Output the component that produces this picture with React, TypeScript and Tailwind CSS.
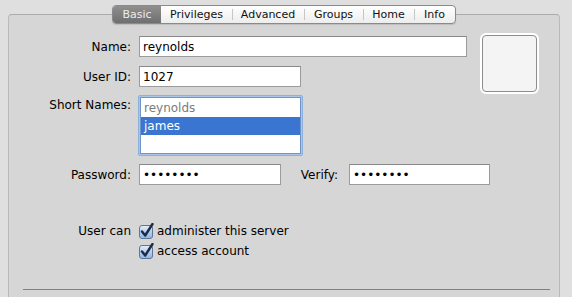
import React from 'react';

const tabs = [
  { label: 'Basic', w: 'w-[48px]' },
  { label: 'Privileges', w: 'w-[71px]' },
  { label: 'Advanced', w: 'w-[72px]' },
  { label: 'Groups', w: 'w-[59px]' },
  { label: 'Home', w: 'w-[51px]' },
  { label: 'Info', w: 'w-[41px]' },
];

const Checkbox: React.FC = () => (
  <svg width="17" height="17" viewBox="0 0 17 17" className="shrink-0">
    <defs>
      <linearGradient id="cbg" x1="0" y1="0" x2="0" y2="1">
        <stop offset="0" stopColor="#e6f0fb" />
        <stop offset="0.5" stopColor="#b3cff0" />
        <stop offset="1" stopColor="#8db6e6" />
      </linearGradient>
    </defs>
    <rect x="0.5" y="2.5" width="13" height="13" rx="2.5" fill="url(#cbg)" stroke="#5f7595" />
    <path d="M3 8.5 L6.2 12.5 L13.5 1" fill="none" stroke="#1d2b44" strokeWidth="2.4" strokeLinecap="round" strokeLinejoin="round" />
  </svg>
);

const Field: React.FC<{ w: string; children?: React.ReactNode }> = ({ w, children }) => (
  <div className={`${w} h-[21px] bg-white border border-[#9b9b9b] border-t-[#8a8a8a] pl-[3px] flex items-center text-black`}>
    {children}
  </div>
);

const Label: React.FC<{ w?: string; children: React.ReactNode }> = ({ w = 'w-[122px]', children }) => (
  <div className={`${w} shrink-0 text-right text-black`}>{children}</div>
);

export default function App() {
  return (
    <div
      className="w-[572px] h-[297px] overflow-hidden bg-[#dfdfdf] pt-[14px] text-[12px] leading-none"
      style={{ fontFamily: '"DejaVu Sans", "Liberation Sans", sans-serif' }}
    >
      <div className="ml-[8px] w-[552px] h-[300px] bg-[#d6d6d6] border-t border-l border-r border-[#ababab] border-l-[#b9b9b9] border-r-[#b9b9b9] rounded-t-[4px]">
        {/* tab bar */}
        <div className="-mt-[10px] flex justify-center">
          <div className="flex h-[19px] rounded-[4px] border border-[#8a8a8a] bg-gradient-to-b from-white to-[#ededed] shadow-[0_1px_1px_rgba(0,0,0,0.12)] overflow-hidden text-[11px]">
            {tabs.map((t, i) => (
              <div
                key={t.label}
                className={`${t.w} flex items-center justify-center relative ${
                  i === 0
                    ? 'bg-gradient-to-b from-[#8f8f8f] to-[#6f6f6f] text-[#ececec]'
                    : 'text-[#111]'
                }`}
              >
                {i > 1 && <span className="absolute left-0 top-[3px] h-[11px] w-px bg-[#c6c6c6]" />}
                {t.label}
              </div>
            ))}
          </div>
        </div>

        {/* top section */}
        <div className="flex items-start mt-[9px]">
          <div className="w-[458px] mt-[3px]">
            <div className="flex items-center gap-[8px]">
              <Label>Name:</Label>
              <Field w="w-[328px]">reynolds</Field>
            </div>
            <div className="flex items-center gap-[8px] mt-[9px]">
              <Label>User ID:</Label>
              <Field w="w-[162px]">1027</Field>
            </div>
            <div className="flex items-start gap-[7px] mt-[8px]">
              <Label w="w-[122px] pt-[4px]">Short Names:</Label>
              <div className="w-[165px] h-[61px] rounded-[2px] border border-[#8db0dc] p-[1px] bg-[#a9c6ea]">
                <div className="h-full bg-white border border-[#6f95c6] pt-[1px]">
                  <div className="h-[18px] flex items-center pl-[3px] text-[#7c7c7c]">reynolds</div>
                  <div className="h-[18px] flex items-center pl-[3px] bg-[#3a76d1] text-white">james</div>
                </div>
              </div>
            </div>
          </div>
          <div className="ml-[13px] w-[59px] h-[61px] rounded-[6px] bg-white p-[2px]">
            <div className="w-full h-full rounded-[4px] border border-[#8d8d8d] bg-[#f4f4f4]" />
          </div>
        </div>

        {/* password row */}
        <div className="flex items-center mt-[8px]">
          <Label>Password:</Label>
          <div className="ml-[8px]">
            <Field w="w-[142px]">
              <span className="tracking-[0px]">••••••••</span>
            </Field>
          </div>
          <Label w="w-[57px]">Verify:</Label>
          <div className="ml-[11px]">
            <Field w="w-[141px]">
              <span>••••••••</span>
            </Field>
          </div>
        </div>

        {/* user can */}
        <div className="mt-[36px]">
          <div className="flex items-center h-[20px]">
            <Label>User can</Label>
            <div className="ml-[8px] flex items-center gap-[1px]">
              <Checkbox />
              <span className="text-black">administer this server</span>
            </div>
          </div>
          <div className="flex items-center h-[20px]">
            <div className="w-[122px]" />
            <div className="ml-[8px] flex items-center gap-[1px]">
              <Checkbox />
              <span className="text-black">access account</span>
            </div>
          </div>
        </div>

        <div className="mt-[28px] ml-[14px] w-[527px] h-px bg-[#808080]" />
      </div>
    </div>
  );
}
